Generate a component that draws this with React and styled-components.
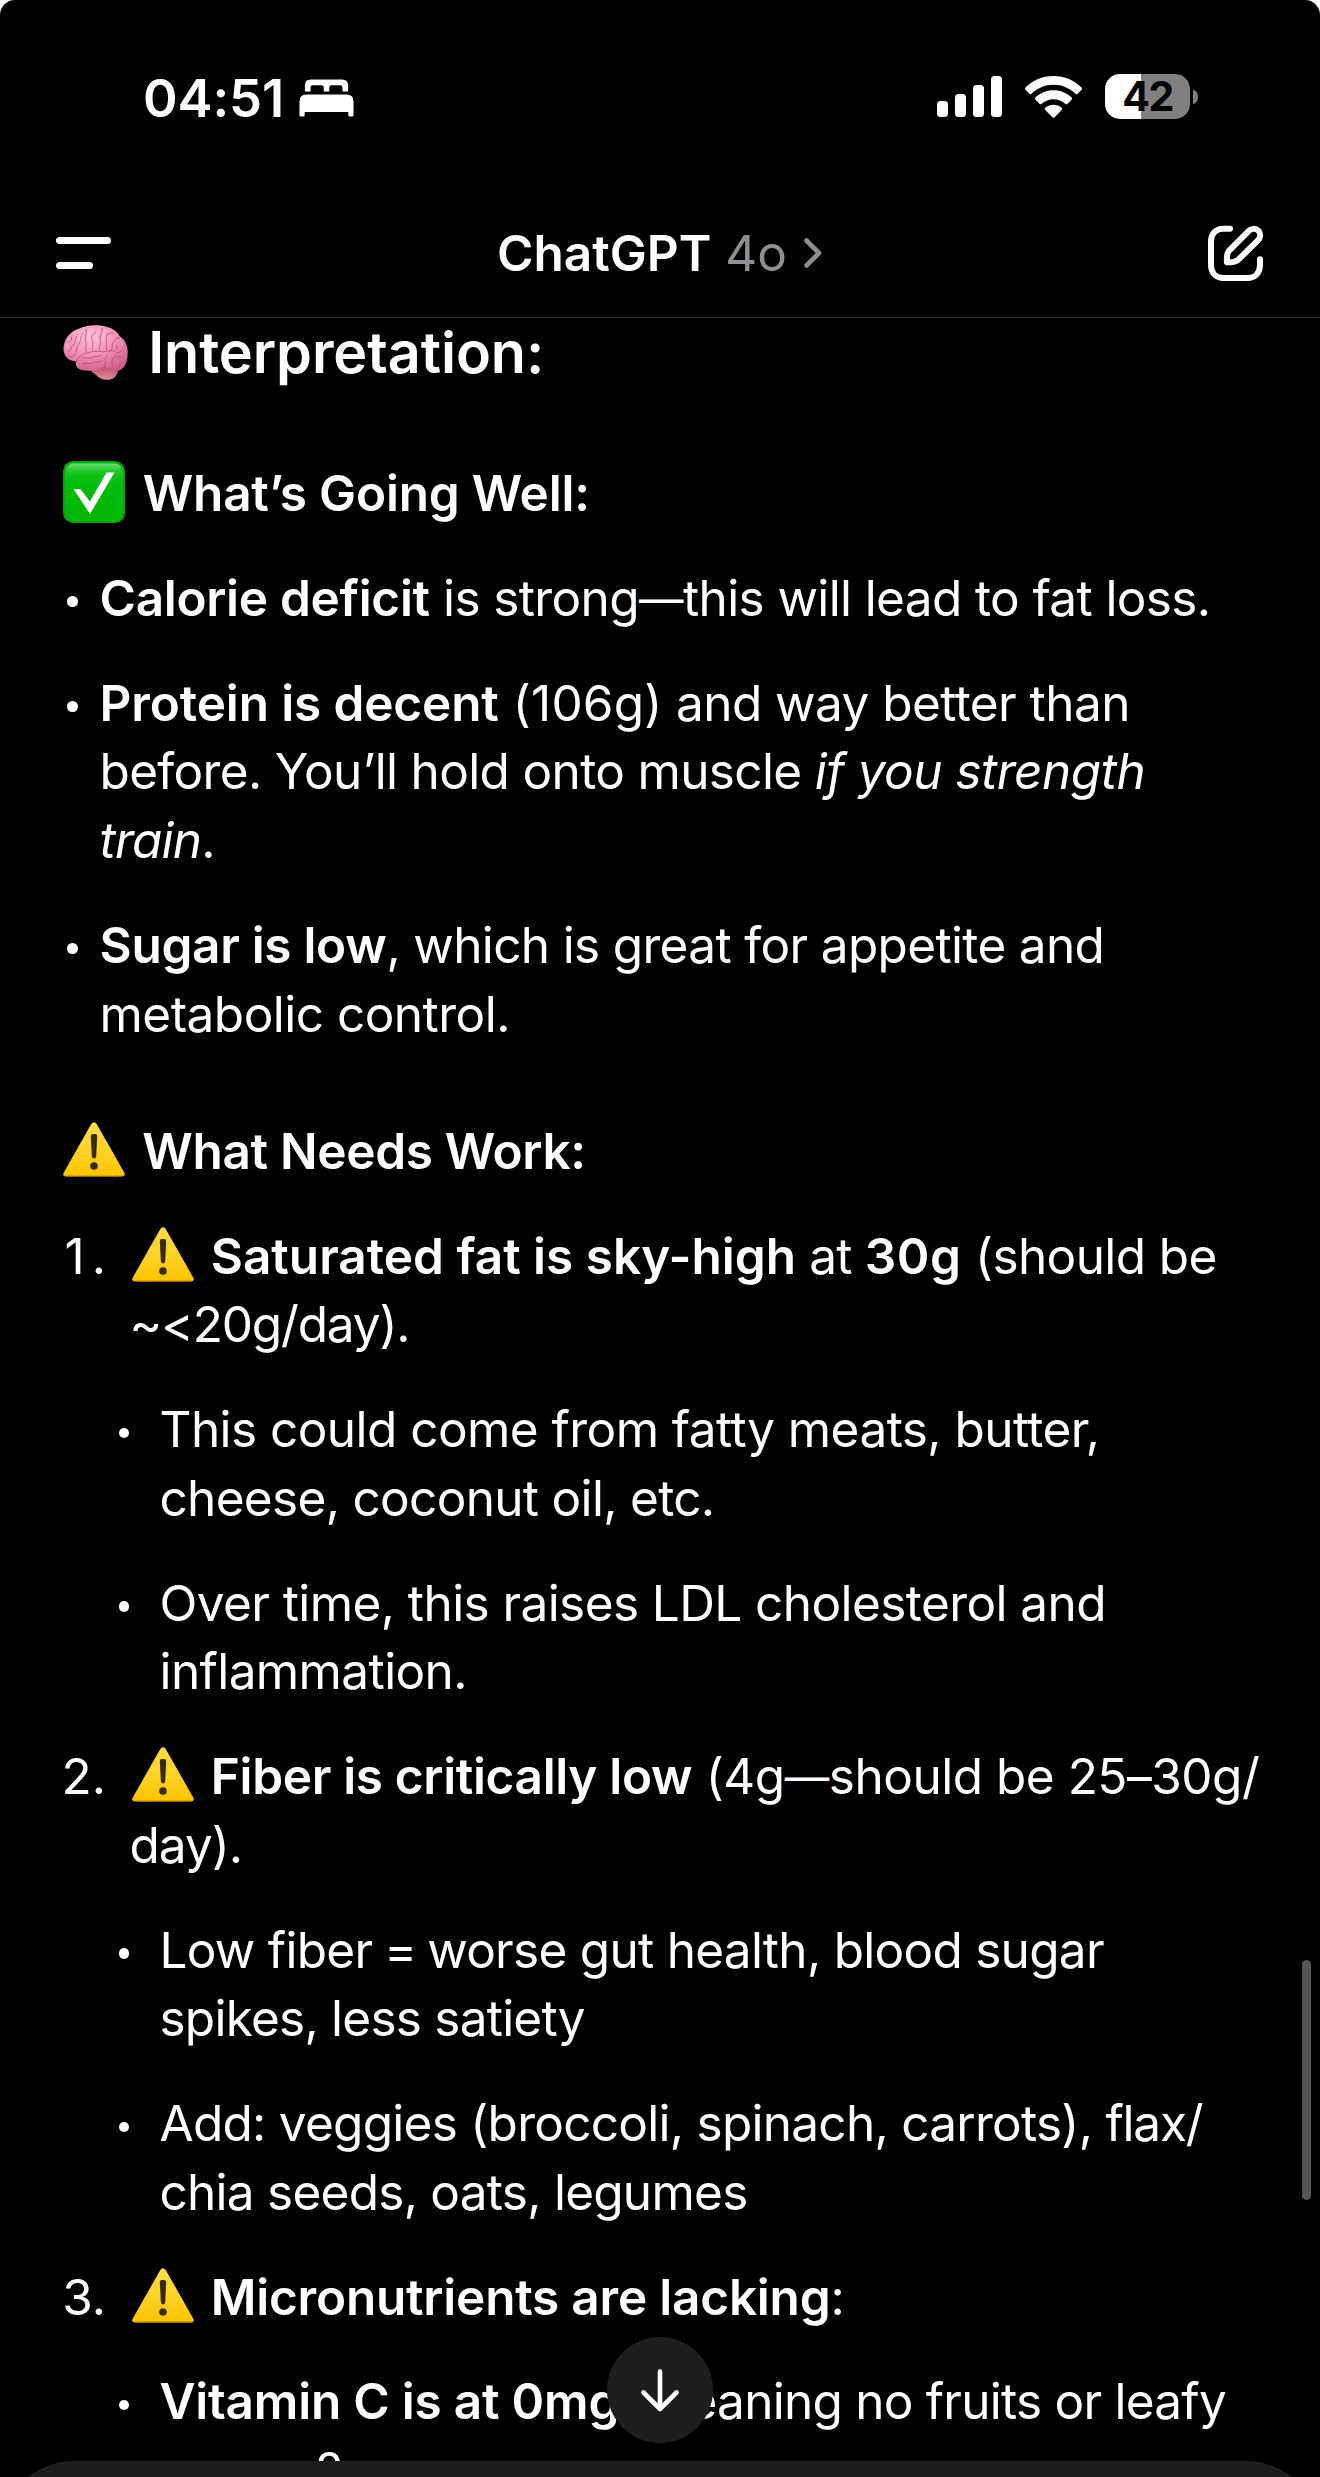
import React from "react";
import styled, { createGlobalStyle } from "styled-components";

const GlobalStyle = createGlobalStyle`
  html, body { margin: 0; padding: 0; background: #fff; }
  * { box-sizing: border-box; }
`;

const Screen = styled.div`
  position: relative;
  display: flex;
  flex-direction: column;
  width: 1320px;
  height: 2477px;
  overflow: hidden;
  border-radius: 15px 15px 0 0;
  background: #000;
  color: #fff;
  font-family: Inter, "Liberation Sans", sans-serif;
`;

const StatusBar = styled.header`
  display: flex;
  flex: none;
  align-items: center;
  justify-content: space-between;
  height: 196px;
  padding: 0 122px 0 143px;
`;

const StatusLeft = styled.div`
  display: flex;
  align-items: center;
  gap: 15px;
`;

const Clock = styled.span`
  font-size: 52.5px;
  font-weight: 600;
  line-height: 64px;
  letter-spacing: -0.1px;
`;

const StatusRight = styled.div`
  display: flex;
  align-items: center;
  padding-bottom: 3px;
`;

const SignalIcon = styled.svg`
  display: block;
  margin-right: 23px;
`;

const WifiIcon = styled.svg`
  display: block;
  margin-right: 23px;
`;

const Battery = styled.div`
  display: flex;
  align-items: center;
  gap: 3px;
`;

const BatteryBody = styled.div`
  display: flex;
  align-items: center;
  justify-content: center;
  width: 85px;
  height: 45px;
  border-radius: 15px;
  background: linear-gradient(90deg, #fff 42%, #808080 42%);
  color: #000;
  font-size: 41px;
  font-weight: 700;
  line-height: 45px;
  letter-spacing: -1.6px;
`;

const BatteryCap = styled.div`
  width: 5px;
  height: 14px;
  border-radius: 0 5px 5px 0 / 0 7px 7px 0;
  background: #808080;
`;

const NavBar = styled.nav`
  display: grid;
  flex: none;
  grid-template-columns: 1fr auto 1fr;
  align-items: center;
  height: 122px;
  padding: 0 40px 7px;
  border-bottom: 1px solid #2e2e2e;
`;

const MenuButton = styled.button`
  display: flex;
  flex-direction: column;
  gap: 18px;
  margin: 0 0 0 16px;
  padding: 0;
  border: 0;
  background: none;
`;

const MenuBar = styled.span`
  display: block;
  width: ${(p) => p.$width}px;
  height: 7px;
  border-radius: 3.5px;
  background: #fff;
`;

const Title = styled.h1`
  display: flex;
  align-items: center;
  margin: 0;
  font-size: 49.5px;
  font-weight: 600;
  line-height: 60px;
`;

const Model = styled.span`
  margin: 0 16px 0 14px;
  color: #8e8e93;
  font-weight: 400;
`;

const ComposeButton = styled.button`
  display: block;
  justify-self: end;
  width: 80px;
  height: 80px;
  padding: 0;
  border: 0;
  background: none;
`;

const Message = styled.main`
  display: flex;
  flex-direction: column;
  gap: 36px;
  padding: 4px 0 0 61px;
`;

const SectionTitle = styled.h2`
  height: 60px;
  margin: 0 0 41px;
  font-size: 57.5px;
  font-weight: 600;
  line-height: 60px;
  letter-spacing: -0.08px;
  white-space: nowrap;
`;

const Subheading = styled.h3`
  height: 68.75px;
  margin: ${(p) => p.$spaceAbove || 0}px 0 0;
  font-size: 49.5px;
  font-weight: 600;
  line-height: 68.75px;
  letter-spacing: ${(p) => p.$track ?? -0.2}px;
  white-space: nowrap;
`;

const List = styled.ul`
  display: flex;
  flex-direction: column;
  gap: 36px;
  margin: 0;
  padding: 0 0 0 ${(p) => (p.$nested ? 57.5 : 6)}px;
  list-style: none;
`;

const BulletItem = styled.li`
  display: grid;
  grid-template-columns: ${(p) => (p.$nested ? 41 : 32.5)}px 1fr;
`;

const Dot = styled.span`
  width: 10.5px;
  height: 10.5px;
  margin-top: 32.5px;
  border-radius: 50%;
  background: #fff;
`;

const Numbered = styled.ol`
  display: flex;
  flex-direction: column;
  gap: 36px;
  margin: 0;
  padding: 0;
  list-style: none;
`;

const NumberedItem = styled.li`
  display: flex;
  flex-direction: column;
  gap: 36px;
`;

const NumberedHead = styled.div`
  display: grid;
  grid-template-columns: 45px 1fr;
  column-gap: 23.5px;
`;

const Marker = styled.span`
  margin-right: ${(p) => -(p.$track || 0)}px;
  font-size: 49.5px;
  line-height: 68.75px;
  letter-spacing: ${(p) => p.$track || 0}px;
  text-align: right;
`;

const Line = styled.p`
  height: 68.75px;
  margin: 0;
  font-size: 49.5px;
  line-height: 68.75px;
  letter-spacing: ${(p) => p.$track ?? -0.65}px;
  white-space: pre;
`;

const Strong = styled.strong`
  font-weight: 600;
  letter-spacing: ${(p) => p.$track ?? -0.3}px;
`;

const Run = styled.span`
  letter-spacing: ${(p) => p.$track}px;
`;

const Dash = styled.span`
  font-size: 44.5px;
  line-height: 1;
  letter-spacing: -0.4px;
  vertical-align: 1px;
`;

const Em = styled.em`
  font-style: italic;
  letter-spacing: ${(p) => p.$track ?? -0.5}px;
`;

const Emoji = styled.svg`
  display: inline-block;
  margin: 0 ${(p) => p.$after}px 0 2.25px;
  vertical-align: ${(p) => p.$drop}px;
`;

const ScrollThumb = styled.div`
  position: absolute;
  top: 1960px;
  right: 9px;
  width: 9px;
  height: 240px;
  border-radius: 4.5px;
  background: #555;
`;

const ScrollDown = styled.button`
  position: absolute;
  bottom: 34px;
  left: 607px;
  display: grid;
  place-items: center;
  width: 106px;
  height: 106px;
  padding: 0;
  border: 0;
  border-radius: 50%;
  background: #1e1e1e;
`;

const ComposerSheet = styled.div`
  position: absolute;
  right: 0;
  bottom: 0;
  left: 0;
  height: 16px;
  overflow: hidden;

  &::before {
    content: "";
    display: block;
    height: 160px;
    border-radius: 74px;
    background: #1e1e1e;
  }
`;

function BedGlyph() {
  return (
    <svg width="55" height="38" viewBox="0 0 56 38" fill="#fff" preserveAspectRatio="none">
      <path d="M6 12.5V6.5Q6 .5 12 .5H44Q50 .5 50 6.5V12.5H44.2V8.5Q44.2 6.3 42 6.3H33Q30.8 6.3 30.8 8.5V12.5H25.2V8.5Q25.2 6.3 23 6.3H14Q11.8 6.3 11.8 8.5V12.5Z" />
      <path d="M.5 22.5Q.5 15.5 7.5 15.5H48.5Q55.5 15.5 55.5 22.5V36Q55.5 37.5 54 37.5H51.7Q50.2 37.5 50.2 36V33H5.8V36Q5.8 37.5 4.3 37.5H2Q.5 37.5 .5 36Z" />
    </svg>
  );
}

function Signal() {
  return (
    <SignalIcon width="65" height="41" viewBox="0 0 65 41" fill="#fff">
      <rect x="0" y="25" width="11" height="16" rx="3.5" />
      <rect x="18" y="18" width="11" height="23" rx="3.5" />
      <rect x="36" y="9" width="11" height="32" rx="3.5" />
      <rect x="54" y="0" width="11" height="41" rx="3.5" />
    </SignalIcon>
  );
}

function Wifi() {
  return (
    <WifiIcon width="57" height="42" viewBox="0 0 57 42" fill="#fff">
      <path d="M28.5 0C39.5 0 49.5 4.3 56.5 11.6Q57.5 12.7 56.5 13.8L52.7 17.7Q51.6 18.7 50.5 17.7C44.7 12.2 37 8.8 28.5 8.8S12.3 12.2 6.5 17.7Q5.4 18.7 4.3 17.7L.5 13.8Q-.5 12.7 .5 11.6C7.5 4.3 17.5 0 28.5 0Z" />
      <path d="M28.5 14.3C35.5 14.3 41.8 17 46.6 21.5Q47.6 22.6 46.6 23.7L42.5 27.8Q41.4 28.8 40.3 27.8C37.2 25 33 23.2 28.5 23.2S19.8 25 16.7 27.8Q15.6 28.8 14.5 27.8L10.4 23.7Q9.4 22.6 10.4 21.5C15.2 17 21.5 14.3 28.5 14.3Z" />
      <path d="M28.5 28.7C31.6 28.7 34.5 29.9 36.7 31.8Q37.7 32.9 36.7 34L29.6 41.2Q28.5 42.2 27.4 41.2L20.3 34Q19.3 32.9 20.3 31.8C22.5 29.9 25.4 28.7 28.5 28.7Z" />
    </WifiIcon>
  );
}

function Brain() {
  return (
    <Emoji $after={19} $drop={-7} width="66" height="55" viewBox="25 14 198 166">
      <defs>
        <radialGradient id="cortex" cx="42%" cy="25%" r="78%">
          <stop offset="0" stopColor="#ffc0d6" />
          <stop offset=".5" stopColor="#f293b6" />
          <stop offset="1" stopColor="#cf5f8b" />
        </radialGradient>
        <linearGradient id="stem" x1="0" y1="0" x2="0" y2="1">
          <stop offset="0" stopColor="#b44c68" />
          <stop offset="1" stopColor="#e48a9a" />
        </linearGradient>
      </defs>
      <path d="M104 148C112 158 122 160 130 170C140 181 168 182 178 174C186 166 190 156 192 146L150 136Z" fill="url(#stem)" />
      <path d="M64 124C46 124 26 112 26 86C26 58 44 34 72 25C98 12 136 12 158 20C178 24 190 38 196 48C214 60 222 82 219 104C220 126 208 148 190 153C176 156 162 146 150 141C132 150 104 156 80 150C66 146 60 136 64 124Z" fill="url(#cortex)" />
      <g fill="none" stroke="#b9447a" strokeWidth="3" strokeLinecap="round" strokeLinejoin="round" opacity=".75">
        <path d="M64 124C70 108 82 102 98 98C112 94 122 92 136 94C150 98 158 90 168 92" />
        <path d="M36 66C46 66 52 60 50 50M40 96C50 92 46 80 56 74C64 66 58 54 68 46" />
        <path d="M60 100C70 90 62 82 72 72C80 62 74 48 84 38" />
        <path d="M96 96C88 84 98 76 92 62C88 50 98 40 94 26" />
        <path d="M116 92C108 82 120 70 112 58C108 46 116 38 126 34" />
        <path d="M136 92C130 80 142 68 136 56C134 44 144 38 142 24" />
        <path d="M156 90C150 78 160 66 154 54C154 44 162 38 174 38" />
        <path d="M168 92C178 84 168 72 178 64C184 58 184 52 194 52" />
        <path d="M168 92C184 96 190 84 186 76M186 98C200 98 208 88 206 74" />
        <path d="M150 141C156 126 146 116 158 106M170 146C180 136 166 126 176 114C184 108 188 108 198 112" />
        <path d="M190 150C200 140 190 130 202 126M84 132C96 126 104 134 116 128C126 122 134 130 142 122" />
        <path d="M82 114C94 110 100 118 112 112C120 106 130 112 138 106M42 110C50 112 56 110 60 104" />
      </g>
      <g fill="none" stroke="#ffd3e2" strokeWidth="3.2" strokeLinecap="round" opacity=".6">
        <path d="M82 32C74 44 76 52 74 60M104 26C98 40 104 48 102 60M130 26C120 40 128 52 126 66M152 28C144 40 150 52 147 66M44 54C36 66 38 76 36 84M198 62C206 72 206 80 206 84" />
      </g>
    </Emoji>
  );
}

function CheckBox() {
  return (
    <Emoji $after={17.5} $drop={-12} width="62" height="62" viewBox="0 0 62 62">
      <defs>
        <linearGradient id="checkFill" x1="0" y1="0" x2="0" y2="1">
          <stop offset="0" stopColor="#12a81c" />
          <stop offset=".1" stopColor="#1cc427" />
          <stop offset=".35" stopColor="#04bd0b" />
          <stop offset="1" stopColor="#02b606" />
        </linearGradient>
        <linearGradient id="checkShine" x1="0" y1="0" x2="0" y2="1">
          <stop offset="0" stopColor="#8df08f" stopOpacity=".75" />
          <stop offset="1" stopColor="#35cf3a" stopOpacity="0" />
        </linearGradient>
      </defs>
      <rect x=".8" y=".8" width="60.4" height="60.4" rx="9.5" fill="url(#checkFill)" stroke="#0a9d12" strokeWidth="1.6" />
      <rect x="4" y="2.5" width="54" height="12" rx="6" fill="url(#checkShine)" />
      <path d="M10.5 28H17.5L26.8 40.5L43.5 11.5H51.5L27 53Z" fill="#fff" />
    </Emoji>
  );
}

function Warning() {
  return (
    <Emoji $after={17} $drop={-8} width="62" height="55" viewBox="0 0 62 55">
      <defs>
        <linearGradient id="warn" x1="0" y1="0" x2="0" y2="1">
          <stop offset="0" stopColor="#ffdf4a" />
          <stop offset=".6" stopColor="#ffd021" />
          <stop offset="1" stopColor="#fdc400" />
        </linearGradient>
      </defs>
      <path d="M28.3 1.9Q31-1.3 33.7 1.9L61.2 50.5Q63 54.5 59 54.5H3Q-1 54.5 .8 50.5Z" fill="url(#warn)" />
      <path d="M1.5 53.3Q2 54.5 3.2 54.5H58.8Q60 54.5 60.5 53.3Z" fill="#c98f00" opacity=".7" />
      <path d="M27.8 14Q27.8 12 29.8 12H32.2Q34.2 12 34.2 14L33.2 34Q33 36.5 31 36.5T28.8 34Z" fill="#3a2a02" />
      <circle cx="31" cy="44" r="3.8" fill="#3a2a02" />
    </Emoji>
  );
}

function Bullet({ nested, children }) {
  return (
    <BulletItem $nested={nested}>
      <Dot />
      <div>{children}</div>
    </BulletItem>
  );
}

function NumberedEntry({ number, markerTrack, head, children }) {
  return (
    <NumberedItem>
      <NumberedHead>
        <Marker $track={markerTrack}>{number}.</Marker>
        <div>{head}</div>
      </NumberedHead>
      <List $nested>{children}</List>
    </NumberedItem>
  );
}

export default function App() {
  return (
    <Screen>
      <GlobalStyle />
      <StatusBar>
        <StatusLeft>
          <Clock>04:51</Clock>
          <BedGlyph />
        </StatusLeft>
        <StatusRight>
          <Signal />
          <Wifi />
          <Battery>
            <BatteryBody>42</BatteryBody>
            <BatteryCap />
          </Battery>
        </StatusRight>
      </StatusBar>

      <NavBar>
        <MenuButton aria-label="Menu">
          <MenuBar $width={55} />
          <MenuBar $width={37} />
        </MenuButton>
        <Title>
          ChatGPT
          <Model>4o</Model>
          <svg width="20" height="32" viewBox="0 0 20 32" fill="none">
            <path d="M3.5 3.5L16 16L3.5 28.5" stroke="#8e8e93" strokeWidth="4.6" strokeLinecap="round" strokeLinejoin="round" />
          </svg>
        </Title>
        <ComposeButton aria-label="New chat">
          <svg width="80" height="80" viewBox="0 -6 240 240" fill="none" stroke="#fff" strokeWidth="18" strokeLinecap="round" strokeLinejoin="round">
            <path d="M90 41H71C48 41 33 56 33 79V150C33 174 48 189 71 189H142C165 189 180 174 180 150V133" />
            <path d="M88 106L145 49C153 40 167 39 175 47C183 55 182 68 173 77L115 134C107 141 94 142 81 142C80 130 81 114 88 106Z" />
          </svg>
        </ComposeButton>
      </NavBar>

      <Message>
        <SectionTitle>
          <Brain />
          Interpretation:
        </SectionTitle>

        <Subheading>
          <CheckBox />
          What’s Going Well:
        </Subheading>
        <List>
          <Bullet>
            <Line $track={-0.62}>
              <Strong>Calorie deficit</Strong> is strong<Dash>—</Dash>this will lead to fat loss.
            </Line>
          </Bullet>
          <Bullet>
            <Line $track={-0.55}>
              <Strong $track={-0.12}>Protein is decent</Strong>
              <Run $track={0.2}> (106g)</Run> and way better than
            </Line>
            <Line>
              before. You’ll hold onto muscle <Em>if you strength</Em>
            </Line>
            <Line>
              <Em $track={-0.8}>train</Em>.
            </Line>
          </Bullet>
          <Bullet>
            <Line $track={-0.65}>
              <Strong>Sugar is low</Strong>, which is great for appetite and
            </Line>
            <Line $track={-0.52}>metabolic control.</Line>
          </Bullet>
        </List>

        <Subheading $spaceAbove={32.5} $track={-0.3}>
          <Warning />
          What Needs Work:
        </Subheading>
        <Numbered>
          <NumberedEntry
            number={1}
            markerTrack={7}
            head={
              <>
                <Line $track={-0.6}>
                  <Warning />
                  <Strong $track={0}>Saturated fat is sky-high</Strong>
                  <Run $track={-0.8}> at </Run>
                  <Strong $track={0.6}>30g</Strong> (should be
                </Line>
                <Line $track={-1.15}>{"~<20g/day)."}</Line>
              </>
            }
          >
            <Bullet nested>
              <Line $track={-0.55}>This could come from fatty meats, butter,</Line>
              <Line $track={-0.68}>cheese, coconut oil, etc.</Line>
            </Bullet>
            <Bullet nested>
              <Line $track={-0.58}>Over time, this raises LDL cholesterol and</Line>
              <Line $track={-0.6}>inflammation.</Line>
            </Bullet>
          </NumberedEntry>

          <NumberedEntry
            number={2}
            head={
              <>
                <Line $track={-0.48}>
                  <Warning />
                  <Strong $track={-0.32}>Fiber is critically low</Strong> (4g<Dash>—</Dash>should be 25–30g/
                </Line>
                <Line $track={-1}>day).</Line>
              </>
            }
          >
            <Bullet nested>
              <Line $track={-0.72}>
                Low fiber<Run $track={-1.9}> = </Run>worse gut health, blood sugar
              </Line>
              <Line $track={-0.76}>spikes, less satiety</Line>
            </Bullet>
            <Bullet nested>
              <Line $track={-0.73}>
                Add: veggies (broccoli, spinach, carrots), <Run $track={-1.2}>flax/</Run>
              </Line>
              <Line $track={-0.74}>chia seeds, oats, legumes</Line>
            </Bullet>
          </NumberedEntry>

          <NumberedEntry
            number={3}
            head={
              <Line>
                <Warning />
                <Strong $track={-0.2}>Micronutrients are lacking</Strong>:
              </Line>
            }
          >
            <Bullet nested>
              <Line $track={-0.75}>
                <Strong $track={-0.2}>Vitamin C is at 0mg</Strong>, meaning no fruits or leafy
              </Line>
              <Line>greens?</Line>
            </Bullet>
          </NumberedEntry>
        </Numbered>
      </Message>

      <ScrollThumb />
      <ScrollDown aria-label="Scroll to bottom">
        <svg width="42" height="46" viewBox="0 0 42 46" fill="none" stroke="#fff" strokeWidth="4.6" strokeLinecap="round" strokeLinejoin="round">
          <path d="M21 4.5V42M4.5 25.5L21 42L37.5 25.5" />
        </svg>
      </ScrollDown>
      <ComposerSheet />
    </Screen>
  );
}
